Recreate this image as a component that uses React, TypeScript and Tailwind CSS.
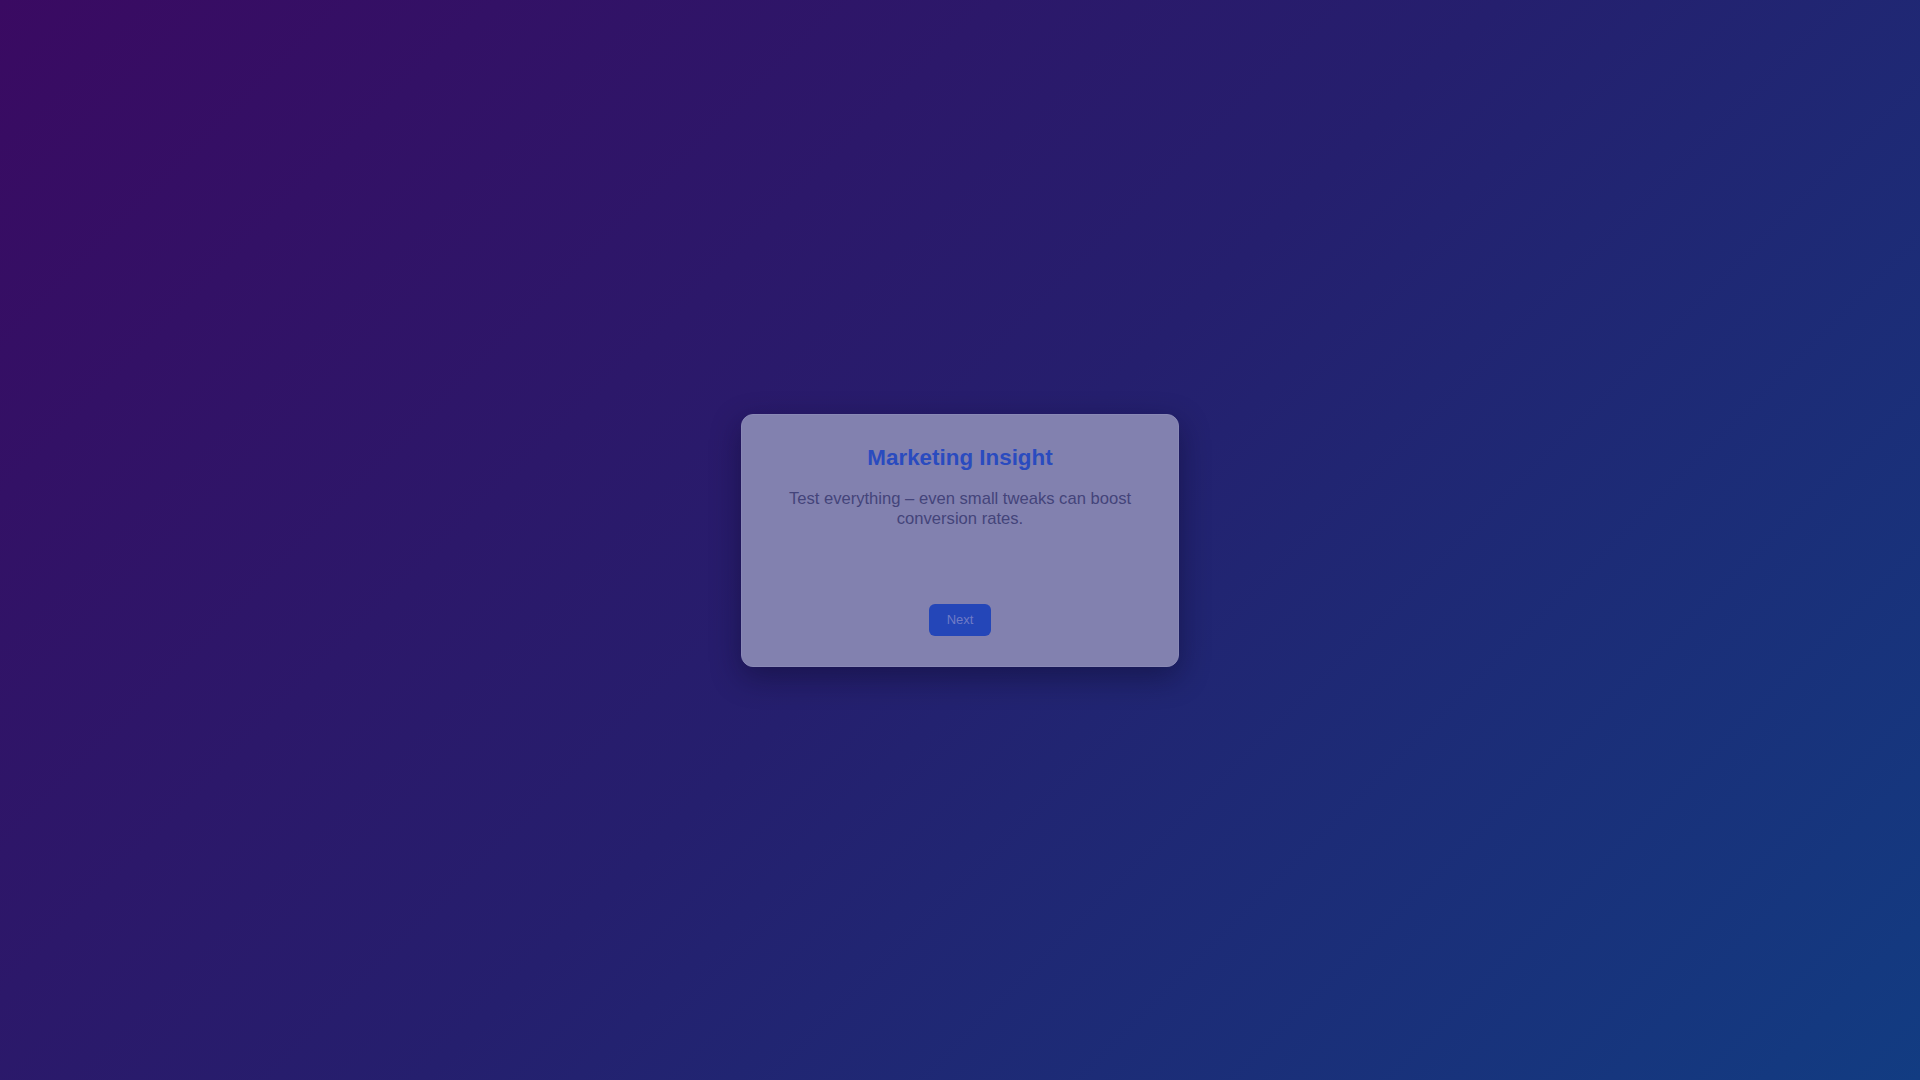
export default function App() {
  return (
    <div className="w-full h-screen flex items-center justify-center bg-[linear-gradient(135deg,#3a0a62_0%,#251f6e_50%,#123c82_100%)] font-['Liberation_Sans',Arial,sans-serif]">
      <div className="w-[438px] h-[253px] flex flex-col items-center rounded-xl bg-[#8281af] border border-[#8a89b6] shadow-[0_10px_30px_rgba(10,8,40,0.45)] px-8 pt-[29px] pb-[30px] text-center">
        <h1 className="text-[22.4px] leading-7 font-bold text-[#2a4bbf]">Marketing Insight</h1>
        <p className="mt-[17px] text-[16.6px] leading-5 text-[#44447a]">
          Test everything – even small tweaks can boost conversion rates.
        </p>
        <div className="flex-1" />
        <button className="h-8 px-[18px] rounded-md bg-[#2446b8] text-[13px] text-[#6f7bc6]">
          Next
        </button>
      </div>
    </div>
  );
}
